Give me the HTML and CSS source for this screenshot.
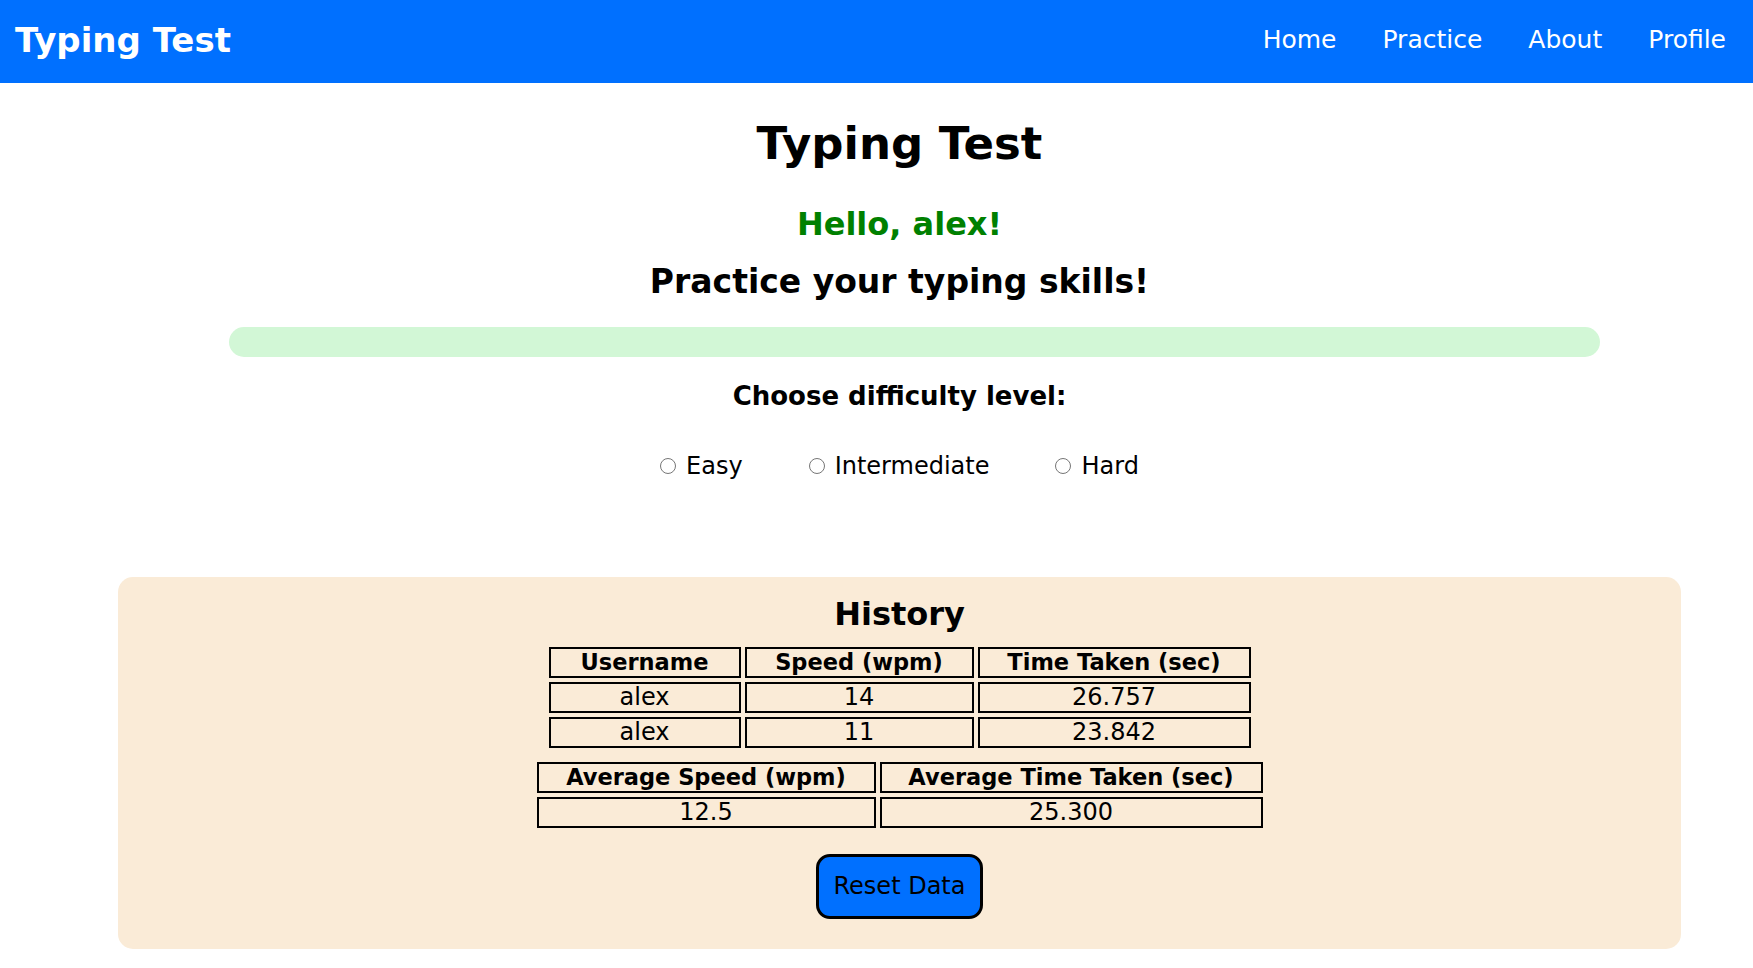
FILE: index.html
```html
<!DOCTYPE html>
<html lang="en">
<head>
    <meta charset="UTF-8">
    <meta name="viewport" content="width=device-width, initial-scale=1.0">
    <title>Typing Test</title>
    <link rel="stylesheet" href="styles.css">
</head>
<body>
    <nav class="navbar">
        <div class="brand">Typing Test</div>
        <ul class="nav-links">
            <li><a href="#">Home</a></li>
            <li><a href="#">Practice</a></li>
            <li><a href="#">About</a></li>
            <li><a href="#">Profile</a></li>
        </ul>
    </nav>

    <main class="container">
        <h1>Typing Test</h1>
        <h2 class="greeting">Hello, alex!</h2>
        <h2 class="subtitle">Practice your typing skills!</h2>

        <div class="progress"></div>

        <h3>Choose difficulty level:</h3>
        <div class="levels">
            <label class="level"><input type="radio" name="level" value="easy">Easy</label>
            <label class="level"><input type="radio" name="level" value="intermediate">Intermediate</label>
            <label class="level"><input type="radio" name="level" value="hard">Hard</label>
        </div>

        <section class="history">
            <h2>History</h2>
            <table class="history-table">
                <tr>
                    <th class="col-user">Username</th>
                    <th class="col-speed">Speed (wpm)</th>
                    <th class="col-time">Time Taken (sec)</th>
                </tr>
                <tr>
                    <td>alex</td>
                    <td>14</td>
                    <td>26.757</td>
                </tr>
                <tr>
                    <td>alex</td>
                    <td>11</td>
                    <td>23.842</td>
                </tr>
            </table>

            <table class="history-table average-table">
                <tr>
                    <th class="col-avg-speed">Average Speed (wpm)</th>
                    <th class="col-avg-time">Average Time Taken (sec)</th>
                </tr>
                <tr>
                    <td>12.5</td>
                    <td>25.300</td>
                </tr>
            </table>

            <button class="reset-btn">Reset Data</button>
        </section>
    </main>
</body>
</html>
```

FILE: styles.css
```css
:root {
    --primary-color: #0070ff;
    --panel-color: #faebd7;
    --bar-color: #d2f7d6;
    --text-color: #000000;
}

* {
    margin: 0;
    padding: 0;
    box-sizing: border-box;
}

body {
    font-family: 'DejaVu Sans', sans-serif;
    color: var(--text-color);
    background-color: #ffffff;
}

.navbar {
    display: flex;
    align-items: center;
    justify-content: space-between;
    height: 83px;
    padding: 0 27px 4px 15px;
    background-color: var(--primary-color);
}

.brand {
    color: #ffffff;
    font-size: 34px;
    font-weight: bold;
    line-height: 40px;
}

.nav-links {
    display: flex;
    gap: 46px;
    list-style: none;
}

.nav-links a {
    color: #ffffff;
    font-size: 25px;
    line-height: 30px;
    text-decoration: none;
}

.container {
    margin: 0 72px 0 118px;
    text-align: center;
}

h1 {
    margin-top: 35px;
    font-size: 45px;
    line-height: 52px;
}

h2 {
    font-size: 32px;
    line-height: 40px;
}

.greeting {
    margin-top: 34px;
    color: #008000;
}

.subtitle {
    margin-top: 18px;
    font-size: 33px;
}

.progress {
    height: 30px;
    margin: 25px 81px 0 111px;
    border-radius: 15px;
    background-color: var(--bar-color);
}

h3 {
    margin-top: 22px;
    font-size: 26px;
    line-height: 34px;
}

.levels {
    display: flex;
    justify-content: center;
    gap: 66px;
    margin-top: 38px;
    font-size: 24px;
    line-height: 30px;
}

.level {
    display: flex;
    align-items: center;
}

.level input {
    width: 16px;
    height: 16px;
    margin: 0 10px 0 0;
}

.history {
    margin-top: 96px;
    padding: 17px 0 30px;
    border-radius: 15px;
    background-color: var(--panel-color);
}

.history-table {
    margin: 9px auto 0;
    border-spacing: 4px;
}

.average-table {
    margin-top: 6px;
}

th, td {
    padding: 0 26px;
    border: 2px solid #000000;
    line-height: 27px;
    white-space: nowrap;
}

th {
    font-size: 22.5px;
}

td {
    font-size: 24px;
}

.col-user { width: 192px; }
.col-speed { width: 229px; }
.col-time { width: 273px; }
.col-avg-speed { width: 339px; }
.col-avg-time { width: 383px; }

.reset-btn {
    display: block;
    margin: 22px auto 0;
    padding: 15px;
    border: 3px solid #000000;
    border-radius: 14px;
    background-color: var(--primary-color);
    color: #000000;
    font-family: inherit;
    font-size: 24px;
    line-height: 29px;
    cursor: pointer;
}
```
